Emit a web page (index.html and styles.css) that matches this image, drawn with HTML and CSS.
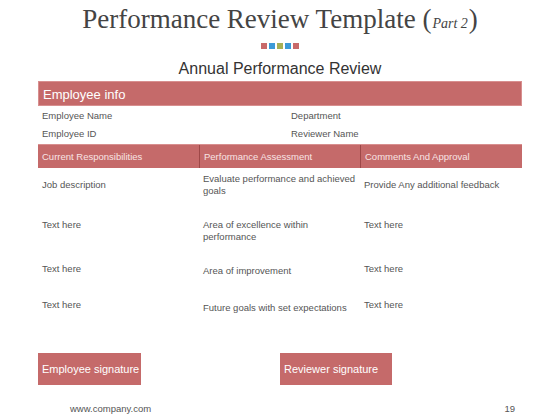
FILE: index.html
```html
<!DOCTYPE html>
<html>
<head>
<meta charset="utf-8">
<link rel="stylesheet" href="styles.css">
</head>
<body>
<div class="slide">
  <header class="head">
    <h1 class="title">Performance Review Template <span class="paren">(</span><span class="part">Part 2</span><span class="paren">)</span></h1>
    <div class="dots">
      <span class="dot red"></span><span class="dot blue"></span><span class="dot olive"></span><span class="dot blue"></span><span class="dot red"></span>
    </div>
  </header>
  <h2 class="subtitle">Annual Performance Review</h2>
  <section class="form">
    <div class="bar">Employee info</div>
    <div class="info">
      <span>Employee Name</span><span>Department</span>
      <span>Employee ID</span><span>Reviewer Name</span>
    </div>
    <div class="thead">
      <div class="th">Current Responsibilities</div>
      <div class="th">Performance Assessment</div>
      <div class="th">Comments And Approval</div>
    </div>
    <div class="row r1">
      <div class="td">Job description</div>
      <div class="td">Evaluate performance and achieved goals</div>
      <div class="td">Provide Any additional feedback</div>
    </div>
    <div class="row r2">
      <div class="td">Text here</div>
      <div class="td">Area of excellence within performance</div>
      <div class="td">Text here</div>
    </div>
    <div class="row r3">
      <div class="td">Text here</div>
      <div class="td lower2">Area of improvement</div>
      <div class="td">Text here</div>
    </div>
    <div class="row r4">
      <div class="td">Text here</div>
      <div class="td lower3">Future goals with set expectations</div>
      <div class="td">Text here</div>
    </div>
  </section>
  <div class="signs">
    <div class="sign emp">Employee signature</div>
    <div class="sign rev">Reviewer signature</div>
  </div>
  <footer class="foot">
    <span>www.company.com</span>
    <span>19</span>
  </footer>
</div>
</body>
</html>
```
FILE: styles.css
```css
html, body {
  margin: 0;
  padding: 0;
  background: #ffffff;
}
.slide {
  width: 560px;
  height: 420px;
  font-family: "Liberation Sans", Arial, sans-serif;
  color: #555;
  display: flex;
  flex-direction: column;
}
.head {
  display: flex;
  flex-direction: column;
  align-items: center;
  padding-top: 3px;
}
.title {
  margin: 0;
  font-family: "Liberation Serif", "DejaVu Serif", serif;
  font-weight: normal;
  font-size: 27px;
  line-height: 32px;
  color: #444;
  white-space: nowrap;
}
.part {
  font-style: italic;
  font-size: 14px;
  padding: 0 1px;
}
.dots {
  display: flex;
  gap: 2px;
  margin-top: 3px;
}
.dot {
  width: 6px;
  height: 6px;
  display: block;
}
.red { background: #c96a6a; }
.blue { background: #3d9ad8; }
.olive { background: #a8b055; }
.subtitle {
  margin: 11px 0 0;
  text-align: center;
  font-weight: normal;
  font-size: 16px;
  line-height: 18px;
  color: #333;
}
.form {
  margin: 3px 38px 0;
  font-size: 9.5px;
  line-height: 12px;
}
.bar {
  background: #c56a6a;
  color: #fff;
  font-size: 13px;
  height: 25px;
  line-height: 26px;
  padding-left: 4px;
  border: 1px solid #d88f8f;
  box-sizing: border-box;
}
.info {
  display: grid;
  grid-template-columns: 249px 1fr;
  grid-auto-rows: 18px;
  padding: 1px 0 0 4px;
  align-items: center;
}
.thead {
  display: grid;
  grid-template-columns: 161px 161px 1fr;
  background: #c56a6a;
  height: 24px;
  margin-top: 1px;
  border-top: 1px solid #d88f8f;
  box-sizing: border-box;
}
.th {
  color: #f8e4e4;
  padding-left: 4px;
  line-height: 23px;
  border-left: 1px solid #9e4848;
}
.th:first-child {
  border-left: none;
}
.row {
  display: grid;
  grid-template-columns: 161px 161px 1fr;
  align-items: start;
}
.td {
  padding: 0 0 0 4px;
}
.r1 {
  height: 34px;
  align-items: center;
}
.r2 {
  margin-top: 17px;
  height: 44px;
}
.r3 {
  height: 36px;
}
.r4 {
  height: 15px;
}
.lower2 { padding-top: 2px; }
.lower3 { padding-top: 3px; }
.signs {
  display: flex;
  margin: 39px 0 0 38px;
  gap: 139px;
}
.sign {
  background: #c56a6a;
  color: #fff;
  font-size: 11px;
  height: 32px;
  line-height: 32px;
  padding-left: 4px;
  box-sizing: border-box;
  white-space: nowrap;
}
.emp { width: 103px; }
.rev { width: 112px; }
.foot {
  display: flex;
  justify-content: space-between;
  margin: 18px 45px 0 70px;
  font-size: 9.5px;
  line-height: 12px;
  color: #555;
}
```
